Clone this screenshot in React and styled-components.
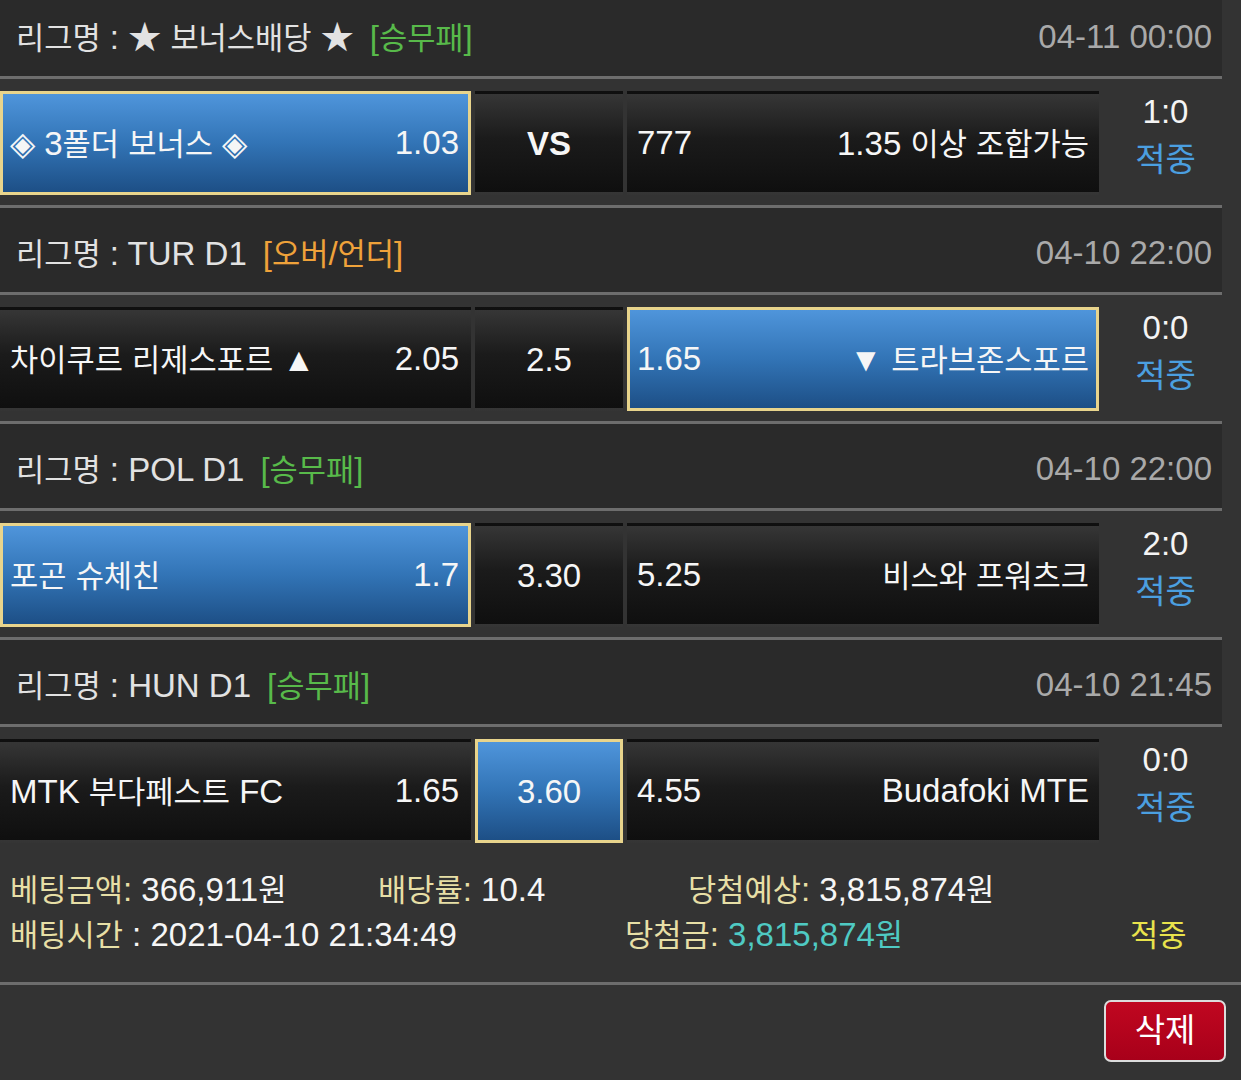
import React from 'react';
import styled, { createGlobalStyle, css } from 'styled-components';

const GlobalStyle = createGlobalStyle`
  html, body {
    margin: 0;
    padding: 0;
    background: #333333;
  }
  body {
    font-family: "Liberation Sans", "Noto Sans CJK KR", sans-serif;
    color: #f4f4f4;
    overflow: hidden;
  }
`;

const Page = styled.div`
  width: 1241px;
  height: 1080px;
  background: #333333;
  overflow: hidden;
`;

const MatchList = styled.div`
  width: 1222px;
  margin-top: -11px;
`;

const LeagueHeader = styled.div`
  display: flex;
  align-items: center;
  justify-content: space-between;
  height: 84px;
  padding: 0 10px 0 16px;
  background: #2a2a2a;
  border-top: 3px solid #6d6d6d;
  border-bottom: 3px solid #6d6d6d;
  font-size: 33px;
  line-height: 40px;
  & > * {
    padding-top: 6px;
  }
`;

const LeagueName = styled.div`
  color: #e2e2e2;
  display: flex;
  align-items: baseline;
  white-space: pre;
`;

const BetType = styled.span`
  margin-left: 16px;
  color: ${(p) => p.$color};
`;

const MatchDate = styled.div`
  color: #a9a9a9;
`;

/* hangul runs are a touch smaller than the latin face next to them */
const Hangul = styled.span`
  font-family: "Noto Sans CJK KR", sans-serif;
  font-size: 0.93em;
`;

const splitHangul = /([\uAC00-\uD7A3]+)/;

function T({ children }) {
  return String(children)
    .split(splitHangul)
    .map((part, i) => (i % 2 ? <Hangul key={i}>{part}</Hangul> : part));
}

const BetRow = styled.div`
  display: grid;
  grid-template-columns: 471px 148px 472px 1fr;
  column-gap: 4px;
  height: 126px;
  padding: 12px 0 10px;
  box-sizing: border-box;
  background: #333333;
`;

const cellBase = css`
  display: flex;
  align-items: center;
  box-sizing: border-box;
  height: 104px;
  font-size: 33px;
  line-height: 40px;
  color: #f6f6f6;
  white-space: pre;
  ${(p) =>
    p.$picked
      ? css`
          background: linear-gradient(#4f95db, #3274b6 50%, #1d4f86);
          border: 3px solid #e8d48c;
        `
      : css`
          background: linear-gradient(#363636, #1b1b1b 45%, #0f0f0f);
          border: 3px solid transparent;
        `}
`;

const SideCell = styled.div`
  ${cellBase}
  justify-content: space-between;
  padding: 0 ${(p) => (p.$home ? '9px' : '7px')} 0 7px;
`;

const DrawCell = styled.div`
  ${cellBase}
  justify-content: center;
  padding-top: 2px;
  font-weight: ${(p) => (p.$bold ? 700 : 400)};
`;

const ResultCell = styled.div`
  display: flex;
  flex-direction: column;
  align-items: center;
  justify-content: center;
  height: 104px;
  padding: 0 0 14px 6px;
  box-sizing: border-box;
  font-size: 33px;
  line-height: 48px;
`;

const Score = styled.span`
  color: #f4f4f4;
`;

const Hit = styled.span`
  color: #4b9fe0;
`;

const Summary = styled.div`
  padding: 13px 0 26px 10px;
  border-bottom: 3px solid #6d6d6d;
  font-size: 33px;
  line-height: 40px;
`;

const SummaryLine = styled.div`
  display: flex;
  height: 45px;
  align-items: center;
  white-space: pre;
`;

const Field = styled.div`
  width: ${(p) => (p.$width ? `${p.$width}px` : 'auto')};
  flex: none;
`;

const Label = styled.span`
  color: #e7dfa6;
`;

const Value = styled.span`
  color: ${(p) => p.$color || '#f6f6f6'};
`;

const ResultText = styled.span`
  color: #e9e34c;
`;

const Actions = styled.div`
  display: flex;
  justify-content: flex-end;
  padding: 15px 15px 0 0;
`;

const DeleteButton = styled.button`
  width: 122px;
  height: 62px;
  border: 2px solid #dcdcdc;
  border-radius: 7px;
  background: linear-gradient(#c00720, #a8001a);
  color: #ffffff;
  font-family: "Liberation Sans", "Noto Sans CJK KR", sans-serif;
  font-size: 33px;
  line-height: 40px;
  padding: 0;
  cursor: pointer;
`;

const GREEN = '#58ba4a';
const ORANGE = '#efa23a';

const matches = [
  {
    league: '★ 보너스배당 ★',
    type: '승무패',
    typeColor: GREEN,
    date: '04-11 00:00',
    home: '◈ 3폴더 보너스 ◈',
    homeOdds: '1.03',
    draw: 'VS',
    drawBold: true,
    awayOdds: '777',
    away: '1.35 이상 조합가능',
    score: '1:0',
    pick: 'home',
  },
  {
    league: 'TUR D1',
    type: '오버/언더',
    typeColor: ORANGE,
    date: '04-10 22:00',
    home: '차이쿠르 리제스포르 ▲',
    homeOdds: '2.05',
    draw: '2.5',
    awayOdds: '1.65',
    away: '▼ 트라브존스포르',
    score: '0:0',
    pick: 'away',
  },
  {
    league: 'POL D1',
    type: '승무패',
    typeColor: GREEN,
    date: '04-10 22:00',
    home: '포곤 슈체친',
    homeOdds: '1.7',
    draw: '3.30',
    awayOdds: '5.25',
    away: '비스와 프워츠크',
    score: '2:0',
    pick: 'home',
  },
  {
    league: 'HUN D1',
    type: '승무패',
    typeColor: GREEN,
    date: '04-10 21:45',
    home: 'MTK 부다페스트 FC',
    homeOdds: '1.65',
    draw: '3.60',
    awayOdds: '4.55',
    away: 'Budafoki MTE',
    score: '0:0',
    pick: 'draw',
  },
];

function Match({ m }) {
  return (
    <>
      <LeagueHeader>
        <LeagueName>
          <T>{`리그명 : ${m.league}`}</T>
          <BetType $color={m.typeColor}>
            <T>{`[${m.type}]`}</T>
          </BetType>
        </LeagueName>
        <MatchDate>{m.date}</MatchDate>
      </LeagueHeader>
      <BetRow>
        <SideCell $home $picked={m.pick === 'home'}>
          <span>
            <T>{m.home}</T>
          </span>
          <span>{m.homeOdds}</span>
        </SideCell>
        <DrawCell $bold={m.drawBold} $picked={m.pick === 'draw'}>
          {m.draw}
        </DrawCell>
        <SideCell $picked={m.pick === 'away'}>
          <span>{m.awayOdds}</span>
          <span>
            <T>{m.away}</T>
          </span>
        </SideCell>
        <ResultCell>
          <Score>{m.score}</Score>
          <Hit>적중</Hit>
        </ResultCell>
      </BetRow>
    </>
  );
}

export default function App() {
  return (
    <Page>
      <GlobalStyle />
      <MatchList>
        {matches.map((m) => (
          <Match key={m.league + m.date} m={m} />
        ))}
      </MatchList>
      <Summary>
        <SummaryLine>
          <Field $width={368}>
            <Label><Hangul>베팅금액</Hangul>:</Label> <Value>366,911<Hangul>원</Hangul></Value>
          </Field>
          <Field $width={310}>
            <Label><Hangul>배당률</Hangul>:</Label> <Value>10.4</Value>
          </Field>
          <Field>
            <Label><Hangul>당첨예상</Hangul>:</Label> <Value>3,815,874<Hangul>원</Hangul></Value>
          </Field>
        </SummaryLine>
        <SummaryLine>
          <Field $width={615}>
            <Label><Hangul>배팅시간</Hangul></Label> <Value>: 2021-04-10 21:34:49</Value>
          </Field>
          <Field $width={505}>
            <Label><Hangul>당첨금</Hangul>:</Label> <Value $color="#4fcac3">3,815,874<Hangul>원</Hangul></Value>
          </Field>
          <Field>
            <ResultText><Hangul>적중</Hangul></ResultText>
          </Field>
        </SummaryLine>
      </Summary>
      <Actions>
        <DeleteButton>삭제</DeleteButton>
      </Actions>
    </Page>
  );
}
